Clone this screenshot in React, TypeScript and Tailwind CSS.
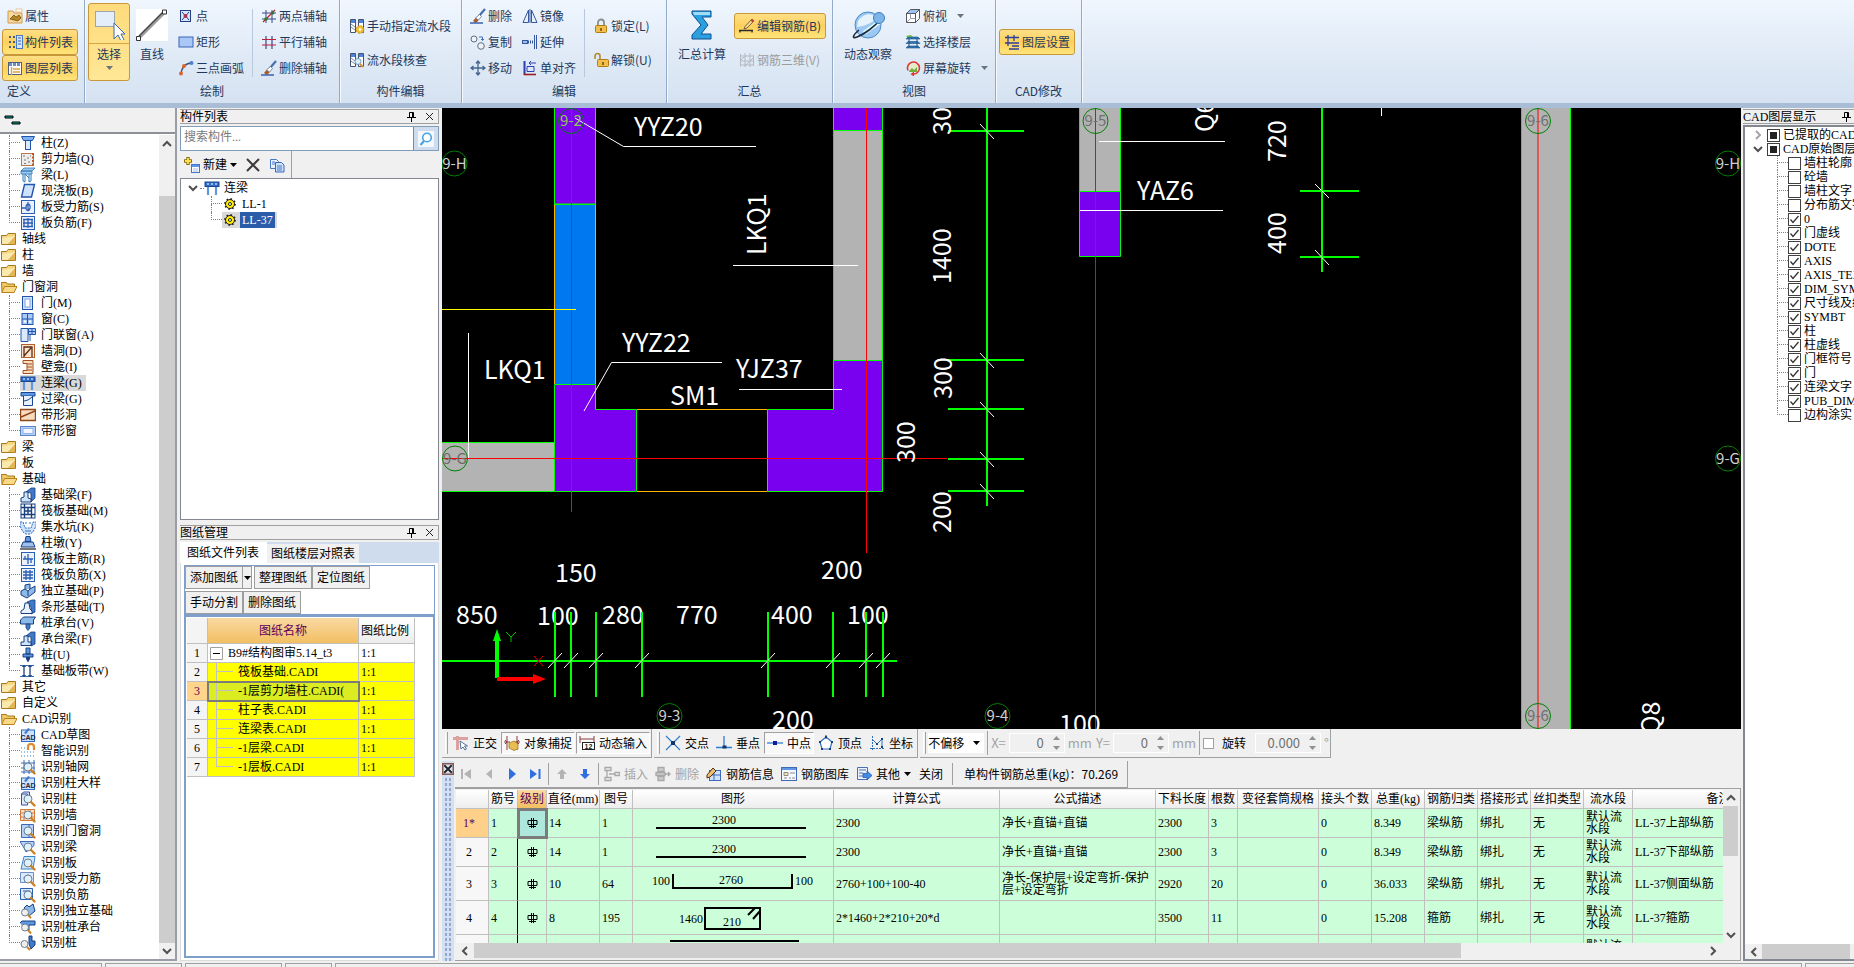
import React, { type ReactNode } from 'react';

/* ---------- small drawings ---------- */

const lens = (
  <>
    <circle cx="8" cy="8" r="4" fill="#dff1fb" stroke="#6d7f92" />
    <path d="M11 11l3.5 3.5" stroke="#c98326" strokeWidth="2.4" strokeLinecap="round" />
  </>
);
const brush = (
  <>
    <path d="M15 1l-6 7" stroke="#4a6fb0" strokeWidth="2.2" />
    <path d="M9.5 6.5l2 2-3 3.5-3-2z" fill="#fff" stroke="#5b6e8c" strokeWidth=".8" />
    <path d="M5.5 10l3 2.5L6 15 3 13z" fill="#a85a2a" />
    <path d="M0 15h13" stroke="#2d57a8" strokeWidth="1.4" />
  </>
);
const hook = (c: string) => (
  <>
    <rect x="1.5" y="1.5" width="13" height="13" fill="#eaf1fc" stroke="#2b5fb4" />
    <path d={c} fill="none" stroke="#2b5fb4" strokeWidth="1.3" />
  </>
);

const ICONS: Record<string, ReactNode> = {
  props: (
    <>
      <path d="M1 3h5l1 2h8v10H1z" fill="#f6d9a0" stroke="#d69a4a" />
      <path d="M3 11l4-4 2 2 3-2 2 3-3 3z" fill="#b88420" stroke="#5b4a10" strokeWidth=".7" />
      <path d="M9 1h6v3H9z" fill="#fff" stroke="#e0b070" strokeWidth=".7" />
    </>
  ),
  complist: (
    <>
      <path d="M2 3h3M2 8h3M2 13h3M6 3h2M6 8h2M6 13h2" stroke="#4b5f80" strokeWidth="2" strokeDasharray="2 1" />
      <rect x="9.5" y="1.5" width="6" height="13" fill="#d5e5fa" stroke="#4a78c0" />
      <path d="M11 4h3M11 7h3M11 10h3" stroke="#2f62b5" />
    </>
  ),
  layers: (
    <>
      <rect x="1.5" y="2.5" width="13" height="12" fill="#fff" stroke="#4b5f80" />
      <path d="M2 4.5h12" stroke="#6f8cc0" strokeWidth="3" strokeDasharray="3 1" />
      <path d="M4.5 7v8M6 9h7M6 12h7" stroke="#e0a040" strokeWidth="1.5" />
    </>
  ),
  point: (
    <>
      <rect x="2.5" y="2.5" width="10" height="11" fill="#d8e4f8" stroke="#253c80" />
      <path d="M4 4l7 8M11 4l-7 8" stroke="#25408f" />
      <circle cx="7.5" cy="8" r="2" fill="#b03050" />
    </>
  ),
  rect: <rect x="1" y="3" width="14" height="10" fill="#a9c8f5" stroke="#3a62b8" />,
  arc: (
    <>
      <path d="M3 14C4 6 8 3 14 3" fill="none" stroke="#3a4f70" strokeWidth="1.3" />
      <circle cx="3" cy="13.5" r="2" fill="#e2622c" />
      <circle cx="6" cy="6" r="2" fill="#e2622c" />
      <circle cx="13.5" cy="3" r="2" fill="#4a80d0" />
    </>
  ),
  twoaxis: (
    <>
      <path d="M5 2v13M11 2v13M1 5h14M1 11h14" stroke="#3b4b86" />
      <path d="M2 14L14 2" stroke="#c02020" strokeWidth="1.3" />
      <circle cx="5" cy="11" r="1.8" fill="#2f7d32" />
      <circle cx="11.5" cy="5" r="1.8" fill="#2f7d32" />
    </>
  ),
  paraxis: (
    <>
      <path d="M5 2v13M11 2v13" stroke="#3b4b86" strokeWidth="1.2" />
      <path d="M1 5.5h14M1 11h14" stroke="#c02040" strokeWidth="1.2" />
    </>
  ),
  brush,
  flowset: (
    <>
      <path d="M1.5 1.5h5v13h-5zM9.5 1.5h5v13h-5z" fill="#fff" stroke="#44546e" />
      <path d="M2 3.5h4M10 3.5h4" stroke="#4c83d8" strokeWidth="3" />
      <path d="M2 9l4 3M2 6l4 3" stroke="#7a8aa0" />
      <circle cx="11" cy="11.5" r="3.8" fill="#f3c234" stroke="#c88e10" strokeDasharray="2 1" />
      <circle cx="11" cy="11.5" r="1.2" fill="#fff" />
    </>
  ),
  flowcheck: (
    <>
      <path d="M1.5 1.5h5v13h-5zM9.5 1.5h5v13h-5z" fill="#fff" stroke="#44546e" />
      <path d="M2 3.5h4M10 3.5h4" stroke="#4c83d8" strokeWidth="3" />
      <path d="M2 9l4 3M2 6l4 3" stroke="#7a8aa0" />
      <circle cx="9" cy="9.5" r="3" fill="#d9f0fb" stroke="#6f9dc0" />
      <path d="M11 12l3 3" stroke="#d8963a" strokeWidth="2" />
    </>
  ),
  copy: (
    <>
      <circle cx="4" cy="5" r="3" fill="#eef3fa" stroke="#5f6e82" />
      <circle cx="11" cy="12" r="3.3" fill="#eef3fa" stroke="#5f6e82" />
      <path d="M9 3h3.5v3.5M11 5l1.5 1.5L14 5" fill="none" stroke="#4270b8" />
    </>
  ),
  move: <path d="M8 1v14M1 8h14M6 3.5L8 1l2 2.5M6 12.5L8 15l2-2.5M3.5 6L1 8l2.5 2M12.5 6L15 8l-2.5 2" fill="none" stroke="#46648f" strokeWidth="1.3" />,
  mirror: (
    <>
      <path d="M6.5 2v12.5H1zM9.5 2v12.5H15z" fill="#e8f0fb" stroke="#35589c" />
      <path d="M8 1v14" stroke="#35589c" />
    </>
  ),
  extend: (
    <>
      <rect x=".5" y="6.5" width="5" height="3" fill="#9fc0ee" stroke="#35589c" />
      <path d="M6 8h5" stroke="#35589c" strokeDasharray="1 1" strokeWidth="3" />
      <path d="M12.5 1v14M14.5 1v14" stroke="#35589c" />
    </>
  ),
  align: (
    <>
      <path d="M2.5 1v14" stroke="#2a3fb0" strokeWidth="2" />
      <path d="M2 14.5h12" stroke="#9c2020" strokeWidth="1.6" />
      <path d="M5 6.5h7v5H5z" fill="#dfe8fb" stroke="#2a3fb0" />
      <path d="M14 3H7M9 1L7 3l2 2" stroke="#2a3fb0" fill="none" />
    </>
  ),
  lock: (
    <>
      <path d="M5 8V4.5a3 3 0 016 0V8" fill="none" stroke="#8d8d8d" strokeWidth="1.8" />
      <rect x="2.5" y="7.5" width="11" height="7" rx="1" fill="#f2c04a" stroke="#b07c14" />
      <path d="M8 10v3" stroke="#6b4a08" strokeWidth="1.5" />
    </>
  ),
  unlock: (
    <>
      <path d="M2 7V4a2.5 2.5 0 015 0v4" fill="none" stroke="#b08a30" strokeWidth="1.6" />
      <rect x="4.5" y="7.5" width="11" height="7" rx="1" fill="#f2c04a" stroke="#b07c14" />
      <path d="M10 10v3" stroke="#6b4a08" strokeWidth="1.5" />
    </>
  ),
  rebaredit: (
    <>
      <path d="M0 12.5h14M1 12.5v2M13 12.5v2" stroke="#2b2b2b" strokeWidth="1.3" />
      <path d="M5 11l1-2.5L13 1l2 1.8L8 10z" fill="#f4dba0" stroke="#5c4520" strokeWidth=".8" />
      <path d="M12.3 2l2 1.8" stroke="#d0433a" strokeWidth="2" />
    </>
  ),
  rebar3d: <path d="M1.5 2v12.5M6 1v14M11 1v14M14.5 3v11M1 4h14M1 9h14M1 13h14M1 9l5-5M6 14l8-8" fill="none" stroke="#b3b9c2" />,
  cube: (
    <>
      <path d="M1.5 5.5l4-4h9v9l-4 4" fill="#fff" stroke="#55595f" />
      <path d="M1.5 5.5l4-4h9l-4 4z" fill="#9cc3f2" stroke="#55595f" />
      <rect x="1.5" y="5.5" width="9" height="9" fill="#fff" stroke="#55595f" />
      <path d="M5.5 5.5v5l-4 4M5.5 10.5h5" fill="none" stroke="#9a9ea6" />
    </>
  ),
  floors: (
    <>
      <path d="M3 3h10l2 2H1zM3 7.5h10l2 2H1zM3 12h10l2 2H1z" fill="#2f77b8" stroke="#1d5082" strokeWidth=".6" />
      <path d="M1 2l5-1 2 2H2z" fill="#6db33f" />
      <path d="M4 5v8M12 5v8" stroke="#1d5082" />
    </>
  ),
  rotate: (
    <>
      <rect x="4" y="4" width="8" height="8" fill="#e5edc8" />
      <path d="M4 11l3-3 2 2 3-3v5H4z" fill="#6fae3e" />
      <path d="M3 10.5A6 6 0 118 14" fill="none" stroke="#e0392c" strokeWidth="1.6" />
      <path d="M5.5 14.2L9 11.5v5z" fill="#e0392c" />
    </>
  ),
  layercfg: <path d="M4 1v11M10 1v6M1 3.5h14M1 9h8M8 9h7M8 12h7M5 15h10" fill="none" stroke="#2a3f9a" strokeWidth="1.3" />,

  column: (
    <>
      <path d="M1.5 1.5h13l-2 4h-9z" fill="#7fb0f0" stroke="#2354ac" />
      <rect x="5.5" y="5.5" width="5" height="9" fill="#dce9fc" stroke="#2354ac" />
    </>
  ),
  wall: (
    <>
      <rect x="1.5" y="2.5" width="12" height="12" fill="#eee" stroke="#b9794c" />
      <path d="M3 5h2M7 7h2M4 9h2M8 11h2M4 12.5h2M10 5h1" stroke="#777" />
      <path d="M13 2v13" stroke="#c0561c" strokeWidth="2" strokeDasharray="2 1.5" />
    </>
  ),
  beam: (
    <>
      <path d="M1 4l3-3h11l-3 3zM1 4h11v3H1z" fill="#9ec9ee" stroke="#2f7ab8" strokeWidth=".8" />
      <path d="M3 7v7l2 1V7M9 7v8l2-1V7M5 7l4 4" fill="none" stroke="#2f7ab8" />
    </>
  ),
  slab: <path d="M4.5 1.5h10l-3 12.5h-10z" fill="#cfe2fc" stroke="#2354ac" strokeWidth="1.4" />,
  slabs: hook('M2 9h4c0-5 5-5 4 0-1 4-4 3-4 0M8 3v9'),
  slabf: hook('M3 4.5h10M3 11.5h10M8 3v10M3 8h10M4 4v8M12 4v8'),
  folder: (
    <>
      <path d="M.5 4.5h5l1.5-2h7.5v11H.5z" fill="#f5d67e" stroke="#a07a1c" />
      <path d="M1 13V7l13-2v8z" fill="#fae9ae" />
      <path d="M7 13l7-8v8.5z" fill="#e0a93c" opacity=".8" />
    </>
  ),
  folderopen: (
    <>
      <path d="M.5 3.5h5l1 1.5h7v8H1z" fill="#f0ca62" stroke="#a07a1c" />
      <path d="M3.5 7.5H16l-3 6H.8z" fill="#fbd98a" stroke="#b98216" />
    </>
  ),
  door: (
    <>
      <rect x="2.5" y="1.5" width="10" height="13" fill="#cfe2fc" stroke="#2354ac" />
      <rect x="5" y="4" width="5" height="8" fill="#fff" stroke="#7aa5e2" />
    </>
  ),
  window: (
    <>
      <rect x="2" y="2.5" width="11" height="11" fill="#a9cbf7" stroke="#2354ac" />
      <path d="M7.5 3v10M2 8h11" stroke="#2354ac" />
      <path d="M4 9.5h2v2H4zM9 9.5h2v2H9z" fill="#fff" />
    </>
  ),
  doorwin: (
    <>
      <path d="M1 1.5h7v13H1z" fill="#dce9fc" stroke="#2354ac" />
      <path d="M8.5 1.5h7v6h-7zM12 2v5M9 4.5h6" fill="#a9cbf7" stroke="#2354ac" />
      <path d="M10 8v6" stroke="#2354ac" />
    </>
  ),
  wallhole: (
    <>
      <rect x="1.5" y="1.5" width="13" height="13" fill="#fbe3cf" stroke="#b5602a" />
      <path d="M4 14V4h8v10M4 13l7-8" fill="none" stroke="#5c2c10" strokeWidth="1.3" />
    </>
  ),
  niche: <path d="M3 1.5h10v13H3v-3h4v-7H3zM7 5h5M7 8h5M7 11h5" fill="#f8dcc2" stroke="#a0521e" />,
  linkbeam: (
    <>
      <rect x="1" y="2" width="14" height="4.5" fill="#2f6bc8" stroke="#1b4690" />
      <path d="M3 4h2M7 4h2M11 4h2" stroke="#b8d3f8" strokeWidth="1.5" />
      <path d="M4 7v8M12 7v8" stroke="#5f97e4" strokeWidth="2.2" />
    </>
  ),
  overbeam: (
    <>
      <path d="M1 1.5h14v3.5H1z" fill="#5f97e4" stroke="#1b4690" />
      <path d="M3.5 5v9.5h9V5M4 10l4-1 4-3" fill="#e8f1fd" stroke="#1b4690" />
    </>
  ),
  striphole: <path d="M.5 2.5h15v11H.5zM1 10l14-6" fill="#f8dcc2" stroke="#8f4718" strokeWidth="1.4" />,
  stripwin: (
    <>
      <rect x=".5" y="3.5" width="15" height="9" fill="#b6d2f8" stroke="#5a83c8" />
      <rect x="3" y="5.5" width="10" height="5" fill="#f3f8ff" stroke="#8fb2e6" />
    </>
  ),
  fbeam: (
    <>
      <path d="M6 5l5-4h4v10l-4 4V6z" fill="#3f79c8" stroke="#173f7c" strokeWidth=".8" />
      <path d="M1 11l3-1V5h4v6l3 1v3H1z" fill="#cfe2fc" stroke="#173f7c" />
    </>
  ),
  raft: (
    <>
      <rect x="1" y="1" width="14" height="14" fill="#fff" stroke="#173f7c" />
      <path d="M4.5 1v14M11.5 1v14M1 4.5h14M1 11.5h14M8 4v8M4 8h8" stroke="#173f7c" strokeWidth="1.4" />
    </>
  ),
  pit: (
    <>
      <path d="M0 3h3l2 6h6l2-6h3v4l-3 6-3 2H6l-3-2-3-6z" fill="#cfe2fc" stroke="#2d6cc0" strokeDasharray="2 1" />
      <path d="M5 12h6M6 3v2M10 3v2" stroke="#2d6cc0" />
    </>
  ),
  pier: (
    <>
      <path d="M6 1.5h4l1 5H5z" fill="#5f97e4" stroke="#173f7c" />
      <path d="M3 7h10l2 5H1z" fill="#9fc0ee" stroke="#173f7c" />
      <path d="M0 14h16" stroke="#777" strokeWidth="2" />
    </>
  ),
  raftm: hook('M3 8h10M8 3v10M5 5v3M11 8v4'),
  raftf: hook('M3 5h10M3 11h10M6 3v10M10 3v10M3 8h10'),
  indep: <path d="M1 8l4-2V2l5-1v5l5-3v6l-8 6-6-3zM5 6l3 2 2-2M8 8v5" fill="#8db8ea" stroke="#173f7c" />,
  strip: (
    <>
      <path d="M7 3l5-2h3v12l-4 2V8z" fill="#3f79c8" stroke="#173f7c" strokeWidth=".8" />
      <path d="M1 14.5V12l3-2 1-6h4l1 6 2 2v2.5z" fill="#e8f1fd" stroke="#173f7c" />
    </>
  ),
  pilecap: (
    <>
      <path d="M.5 5l3-3h12l-2 3v4H.5z" fill="#8db8ea" stroke="#173f7c" />
      <path d="M6 9h4v4l-2 2.5L6 13z" fill="#3f79c8" stroke="#173f7c" strokeWidth=".8" />
    </>
  ),
  capbeam: (
    <>
      <path d="M6 5l5-4h4v12l-4 2V6z" fill="#3f79c8" stroke="#173f7c" strokeWidth=".8" />
      <path d="M1 14.5V11h3V5h4v6h3v3.5z" fill="#cfe2fc" stroke="#173f7c" />
    </>
  ),
  pile: (
    <>
      <path d="M6 1h4v6H6zM3 7h10v3H3z" fill="#5f97e4" stroke="#173f7c" />
      <path d="M6 10h4v2l-2 3.5L6 12z" fill="#173f7c" />
    </>
  ),
  band: (
    <>
      <path d="M0 2.5h15M0 13.5h15" stroke="#2d6cc0" strokeDasharray="2 1" />
      <path d="M4 3v10M10 3v10M2 3h4M8 3h4M2 13h4M8 13h4" stroke="#173f7c" strokeWidth="1.3" />
    </>
  ),
  cad: (
    <>
      <rect x="1.5" y="3" width="13" height="11.5" fill="#cfe2fc" stroke="#2d6cc0" />
      <path d="M4 6l4-5 2 1-4 5z" fill="#3f79c8" />
      <text x="8" y="13" textAnchor="middle" fontSize="7" fontWeight="700" fontFamily="Liberation Sans" fill="#1c2b4c">CAD</text>
    </>
  ),
  smart: (
    <>
      <path d="M1 5h6M1 9h14M1 13h14" stroke="#2d8bd8" strokeWidth="1.2" strokeDasharray="1 2" />
      <path d="M8 7V4a3 3 0 016 0v3" fill="none" stroke="#e38a2c" strokeWidth="2.2" />
    </>
  ),
  idgrid: (
    <>
      <path d="M4 1v14M9 1v14M14 1v14M1 4h14M1 9h14M1 13h14" stroke="#3f68b8" />
      {lens}
    </>
  ),
  idcol: (
    <>
      <path d="M1.5 3l2-2h6v3M1.5 3h6v11h-6z" fill="#dce9fc" stroke="#3b4f9c" />
      {lens}
    </>
  ),
  idwall: (
    <>
      <path d="M.5 2.5h14v11H.5zM0 6h15M0 10h15M5 2v4M10 2v4M4 10v4" fill="#fbe3cf" stroke="#d07a3e" />
      {lens}
    </>
  ),
  idwin: (
    <>
      <path d="M1.5 1.5h12v13h-12zM9 2v12" fill="#b6d2f8" stroke="#3f68b8" />
      {lens}
    </>
  ),
  idbeam: (
    <>
      <path d="M0 2.5h14v4L6 13l-2-4z" fill="#b6d2f8" stroke="#3f68b8" />
      {lens}
    </>
  ),
  idslab: (
    <>
      <path d="M4 1.5h11l-2 12.5H1z" fill="#cfe9fc" stroke="#3a84c8" />
      {lens}
    </>
  ),
  idrebar: (
    <>
      <path d="M.5 1.5h13v10H.5zM3 7h5V3" fill="#dce9fc" stroke="#6f8fc8" />
      {lens}
    </>
  ),
  idneg: (
    <>
      <path d="M.5 1.5h12v11H.5zM3 4h7M6 4v7" fill="#dce9fc" stroke="#2b5fb4" />
      {lens}
    </>
  ),
  idind: (
    <>
      <path d="M4 5l3-3 2 2 4-3 2 7-6 5z" fill="#8db8ea" stroke="#173f7c" />
      <circle cx="5" cy="9.5" r="3.5" fill="#eee" stroke="#6d7f92" />
      <path d="M8 12l3 3" stroke="#c98326" strokeWidth="2" />
    </>
  ),
  idcap: (
    <>
      <path d="M0 4l2-2h13v4H9v5H6" fill="#5f97e4" stroke="#173f7c" />
      <circle cx="5" cy="8.5" r="3.5" fill="#eee" stroke="#6d7f92" />
      <path d="M8 11l3 3.5" stroke="#c98326" strokeWidth="2" />
    </>
  ),
  idpile: (
    <>
      <path d="M9 1h3v5h3v4l-4 4-2-5z" fill="#3f79c8" stroke="#173f7c" />
      <circle cx="4.5" cy="9" r="3.5" fill="#eee" stroke="#6d7f92" />
      <path d="M7 12l3 3" stroke="#c98326" strokeWidth="2" />
    </>
  ),
  search: (
    <>
      <rect width="16" height="16" fill="#f2f8fe" />
      <circle cx="9" cy="6.5" r="4.3" fill="#fff" stroke="#45a4e4" strokeWidth="1.6" />
      <path d="M6 10l-3.5 4" stroke="#45a4e4" strokeWidth="2" />
    </>
  ),
  add: (
    <>
      <path d="M4 0v8M0 4h8" stroke="#8a6d12" strokeWidth="3.4" />
      <path d="M4 1v6M1 4h6" stroke="#ffe14d" strokeWidth="1.8" />
      <rect x="7.5" y="7.5" width="8" height="8" fill="#fff" stroke="#3f79c8" />
      <path d="M8 9h7" stroke="#5f97e4" strokeWidth="2" />
      <path d="M9 12h5M9 14h5" stroke="#9fc0ee" />
    </>
  ),
  remove: <path d="M2 2l12 12M14 2L2 14" stroke="#3b3b3b" strokeWidth="2" />,
  pages: (
    <>
      <path d="M1.5 2.5h6l2 2v7h-8z" fill="#e8f1fd" stroke="#4a78c8" />
      <path d="M6.5 5.5h6l2.5 2.5v7h-8.5z" fill="#cfe2fc" stroke="#3a68b8" />
      <path d="M3 5h3M3 7h3M8 9h5M8 11h5M8 13h5" stroke="#4a78c8" />
    </>
  ),
  gear: (
    <>
      <circle cx="8" cy="8" r="4.5" fill="#ffee00" stroke="#222" strokeWidth="1" />
      <circle cx="8" cy="8" r="5" fill="none" stroke="#222" strokeWidth="1.8" strokeDasharray="1.5 2.4" />
      <circle cx="8" cy="8" r="1.5" fill="#fff" stroke="#222" />
    </>
  ),
  ortho: (
    <>
      <path d="M0 3.5h15M4.5 1v14" stroke="#dba0a0" strokeWidth="3" />
      <path d="M7 6l1 8 2-2 2 3 1.5-1-2-3h3z" fill="#fff" stroke="#52709c" />
    </>
  ),
  snap: (
    <>
      <path d="M3 1v14M13 1v14M0 7h6M10 7h6M1 5l2 2-2 2M15 5l-2 2 2 2" fill="none" stroke="#8c3a3a" />
      <path d="M5 8l5-2 4 3v5l-4 1.5L5 13z" fill="#e8bd52" stroke="#9a6d14" strokeWidth=".7" />
    </>
  ),
  dyn: (
    <>
      <path d="M1 1v7M15 1v7M1 4h14" stroke="#8c3a3a" />
      <rect x="3.5" y="7.5" width="12" height="7" fill="#fff" stroke="#222" />
      <text x="9.5" y="13.5" textAnchor="middle" fontSize="7" fontWeight="700" fontFamily="Liberation Sans" fill="#222">12</text>
    </>
  ),
  cross: (
    <>
      <path d="M1 1l14 14M15 1L1 15" stroke="#2f7fd0" strokeWidth="1.2" />
      <path d="M6 6h4v4H6z" fill="#12366c" />
    </>
  ),
  perp: (
    <>
      <path d="M8 1v12M0 12.5h16" stroke="#2f7fd0" strokeWidth="1.3" />
      <path d="M6.5 10.5h4v3h-4z" fill="#12366c" />
    </>
  ),
  mid: (
    <>
      <path d="M0 8h16" stroke="#2f7fd0" strokeWidth="1.3" />
      <path d="M6 6h4v4H6z" fill="#101c9c" />
    </>
  ),
  vertex: (
    <>
      <path d="M8 2l6 5-2 7H4L2 7z" fill="#fff" stroke="#2f6fc0" strokeWidth="1.2" />
      <path d="M7 .5h2v3H7zM1 6h2v2H1zM13 6h2v2h-2zM3 13h2v2H3zM11 13h2v2h-2z" fill="#173f7c" />
    </>
  ),
  coord: (
    <>
      <path d="M3.5 1v14M1 13.5h14" fill="none" stroke="#2f6fc0" strokeDasharray="2 1" />
      <path d="M4 5l4 4 5-5v8" fill="none" stroke="#2f6fc0" />
      <path d="M7 8h2v2H7zM12 3h2v2h-2zM12 11h2v2h-2z" fill="#173f7c" />
    </>
  ),
  first: <path d="M3 3h2v10H3zM13 3v10L6 8z" fill="#b4b4b4" />,
  prev: <path d="M11 3v10L5 8z" fill="#b4b4b4" />,
  next: <path d="M5 2v12l7-6z" fill="#2f6fe0" />,
  last: <path d="M11.5 3h2v10h-2zM3 3v10l7-5z" fill="#2f6fe0" />,
  up: <path d="M8 3l5 5h-3v5H6V8H3z" fill="#b4b4b4" />,
  down: <path d="M8 13l5-5h-3V3H6v5H3z" fill="#2f6fe0" />,
  insert: <path d="M1 1.5h6v3H1zM1 11.5h6v3H1zM11 6.5h4.5v3H11zM5 8h6M3 5v6" fill="#eee" stroke="#a8a8a8" strokeWidth="1.3" />,
  del: <path d="M3 1.5h6v4H3zM1 6.5h9v3H1zM3 10.5h6v4H3zM10 8h5M13 6l2 2-2 2" fill="#ccc" stroke="#a8a8a8" strokeWidth="1.3" />,
  info: (
    <>
      <rect x="3.5" y="4.5" width="11" height="10" fill="#cfe2fc" stroke="#3f68b8" />
      <path d="M8 5v9M4 9h10" stroke="#3f68b8" />
      <path d="M1 9l6-7 3 3-6 6-3 1z" fill="#e8c070" stroke="#5c2c10" />
    </>
  ),
  lib: (
    <>
      <rect x=".5" y="1.5" width="15" height="13" fill="#f4f9ff" stroke="#3f68b8" />
      <path d="M1 3h14" stroke="#5f97e4" strokeWidth="2" />
      <path d="M3 6.5h4v3H3zM9 7h5M3 12h3M8 12h2M11 12h3" fill="#ffe7a0" stroke="#8a8a8a" />
    </>
  ),
  other: (
    <>
      <path d="M1.5 1.5h10v12h-10z" fill="#eaf2fd" stroke="#4a6fae" />
      <path d="M3 4h7M3 7h4M3 10h4" stroke="#4a6fae" />
      <path d="M7 7.5h4V5l5 4.5L11 14v-2.5H7z" fill="#3f8be8" stroke="#1f4fa0" strokeWidth=".7" />
    </>
  ),
  closegrip: (
    <>
      <rect width="16" height="16" fill="#8a5a50" />
      <rect x="2" y="2" width="12" height="12" fill="#d6e6fa" />
      <path d="M3 3l10 10M13 3L3 13" stroke="#222" strokeWidth="2.4" />
    </>
  ),
};

const Icon = ({ name }: { name: string }) => (
  <svg className="size-4 shrink-0" viewBox="0 0 16 16" aria-hidden="true">
    {ICONS[name]}
  </svg>
);

const Caret = () => (
  <svg className="h-1 w-[7px] shrink-0" viewBox="0 0 7 4" aria-hidden="true">
    <path d="M0 0h7L3.5 4z" fill="currentColor" />
  </svg>
);

const PATHS = {
  up: 'M1 7l4-4 4 4',
  down: 'M1 3l4 4 4-4',
  left: 'M7 1L3 5l4 4',
  right: 'M3 1l4 4-4 4',
};
const Chevron = ({ dir, faint }: { dir: keyof typeof PATHS; faint?: boolean }) => (
  <svg className="size-[10px] shrink-0" viewBox="0 0 10 10" aria-hidden="true">
    <path d={PATHS[dir]} fill="none" stroke={faint ? '#a6a6a6' : '#505050'} strokeWidth="2" />
  </svg>
);

/* ---------- ribbon ---------- */

type RB = { icon: string; label: string; active?: boolean; muted?: boolean; caret?: boolean };

const RibbonButton = ({ icon, label, active, muted, caret }: RB) => (
  <button
    type="button"
    className={`flex h-[26px] items-center gap-[2px] rounded-[3px] border px-1 ${
      active ? 'border-[#c7973a] bg-linear-to-b from-[#fedf86] via-[#fdd05c] to-[#ffe47a]' : 'border-transparent'
    } ${muted ? 'text-[#9b9b9b]' : ''}`}
  >
    <Icon name={icon} />
    <span>{label}</span>
    {caret && (
      <span className="ml-2 text-[#6b7480]">
        <Caret />
      </span>
    )}
  </button>
);

const Stack = ({ items, two }: { items: RB[]; two?: boolean }) => (
  <div className={`flex flex-col items-start ${two ? 'gap-2 pt-[11px]' : 'pt-px'}`}>
    {items.map((b) => (
      <RibbonButton key={b.label} {...b} />
    ))}
  </div>
);

const Group = ({ title, width, pad, children }: { title: string; width: string; pad: string; children: ReactNode }) => (
  <section className={`flex shrink-0 flex-col border-r border-[#93a9c8] shadow-[1px_0_0_#f5f9fe] ${width}`}>
    <div className={`flex flex-1 pt-[2px] ${pad}`}>{children}</div>
    <h2 className="h-5 text-center leading-4">{title}</h2>
  </section>
);

const Divider = () => <div className="mx-[3px] h-[68px] w-px self-center bg-[#b9c8dc]" />;

const Ribbon = () => (
  <header className="flex h-[108px] shrink-0 border-b-[5px] border-[#a9bdd6] bg-linear-to-b from-[#eff6fe] via-[#e1ebf7] to-[#d5e2f1] font-['Noto_Sans_CJK_SC',sans-serif] leading-4 whitespace-nowrap text-[#1e395b]">
    <Group title="定义" width="w-[85px] [&>h2]:pr-[46px]" pad="pl-[2px]">
      <Stack
        items={[
          { icon: 'props', label: '属性' },
          { icon: 'complist', label: '构件列表', active: true },
          { icon: 'layers', label: '图层列表', active: true },
        ]}
      />
    </Group>
    <Group title="绘制" width="w-[255px]" pad="pl-[3px]">
      <button type="button" className="mt-px flex h-[78px] w-[42px] flex-col items-center rounded-[3px] border border-[#c7973a] bg-linear-to-b from-[#fedb7c] to-[#ffe795]">
        <span className="flex h-10 w-full items-center justify-center border-b border-[#d9a640]">
          <svg className="size-8" viewBox="0 0 32 32" aria-hidden="true">
            <rect x="2.5" y="3.5" width="19" height="15" fill="#e4eefb" stroke="#47659a" strokeDasharray="1 1" />
            <path d="M21 15v16l4-4 3 6 3-1-3-6h4z" fill="#fff" stroke="#3f68a8" />
          </svg>
        </span>
        <span className="mt-[2px]">选择</span>
        <span className="mt-1 text-[#6b7480]">
          <Caret />
        </span>
      </button>
      <button type="button" className="ml-1 flex w-9 flex-col items-center pt-[7px]">
        <svg className="size-8 bg-white" viewBox="0 0 32 32" aria-hidden="true">
          <path d="M4 28L28 4" stroke="#9a9a9a" strokeWidth="3" />
          <path d="M3 27L27 3" stroke="#444" strokeWidth="1.5" />
          <path d="M.5 27.5h4v4h-4zM26.5 1h4v4h-4z" fill="#fff" stroke="#333" />
        </svg>
        <span className="mt-[5px]">直线</span>
      </button>
      <div className="ml-[3px]">
        <Stack
          items={[
            { icon: 'point', label: '点' },
            { icon: 'rect', label: '矩形' },
            { icon: 'arc', label: '三点画弧' },
          ]}
        />
      </div>
      <Divider />
      <Stack
        items={[
          { icon: 'twoaxis', label: '两点辅轴' },
          { icon: 'paraxis', label: '平行辅轴' },
          { icon: 'brush', label: '删除辅轴' },
        ]}
      />
    </Group>
    <Group title="构件编辑" width="w-[122px]" pad="pl-1">
      <Stack
        two
        items={[
          { icon: 'flowset', label: '手动指定流水段' },
          { icon: 'flowcheck', label: '流水段核查' },
        ]}
      />
    </Group>
    <Group title="编辑" width="w-[205px]" pad="pl-[3px]">
      <Stack
        items={[
          { icon: 'brush', label: '删除' },
          { icon: 'copy', label: '复制' },
          { icon: 'move', label: '移动' },
        ]}
      />
      <Stack
        items={[
          { icon: 'mirror', label: '镜像' },
          { icon: 'extend', label: '延伸' },
          { icon: 'align', label: '单对齐' },
        ]}
      />
      <Divider />
      <Stack
        two
        items={[
          { icon: 'lock', label: '锁定(L)' },
          { icon: 'unlock', label: '解锁(U)' },
        ]}
      />
    </Group>
    <Group title="汇总" width="w-[166px]" pad="pl-[9px]">
      <button type="button" className="mr-[6px] flex w-[52px] flex-col items-center pt-2">
        <svg className="h-[30px] w-6" viewBox="0 0 24 30" aria-hidden="true">
          <path d="M2 1h19v6h-9l6 8-7 9h10v5H2v-4l9-10-9-11z" fill="#2aa0de" stroke="#0c4f96" />
          <path d="M3 2h17v3H4z" fill="#9fdcf8" />
        </svg>
        <span className="mt-[6px]">汇总计算</span>
      </button>
      <Stack
        two
        items={[
          { icon: 'rebaredit', label: '编辑钢筋(B)', active: true },
          { icon: 'rebar3d', label: '钢筋三维(V)', muted: true },
        ]}
      />
    </Group>
    <Group title="视图" width="w-[163px]" pad="pl-[9px]">
      <button type="button" className="mr-[6px] flex w-[52px] flex-col items-center pt-2">
        <svg className="h-[30px] w-9" viewBox="0 0 36 30" aria-hidden="true">
          <circle cx="18" cy="15" r="13" fill="#9cc8f2" stroke="#4a8ac8" />
          <path d="M8 11C13 3 22 2 27 8c-5 5-12 8-20 9z" fill="#e6f3fd" />
          <path d="M14 23L31 11" stroke="#dff" strokeWidth="4" />
          <path d="M9 20C2 26 2 29 7 27c8-3 18-11 24-18" fill="none" stroke="#1d2c44" strokeWidth="1.6" />
          <circle cx="29" cy="8" r="5.5" fill="#7db5ea" stroke="#3d7dbc" />
        </svg>
        <span className="mt-[6px]">动态观察</span>
      </button>
      <Stack
        items={[
          { icon: 'cube', label: '俯视', caret: true },
          { icon: 'floors', label: '选择楼层' },
          { icon: 'rotate', label: '屏幕旋转', caret: true },
        ]}
      />
    </Group>
    <Group title="CAD修改" width="w-[86px]" pad="pl-[3px]">
      <div className="pt-[27px]">
        <RibbonButton icon="layercfg" label="图层设置" active />
      </div>
    </Group>
  </header>
);

/* ---------- component tree ---------- */

type Folder = { label: string; items?: [string, string][] };

const TREE: Folder[] = [
  {
    label: '',
    items: [
      ['column', '柱(Z)'],
      ['wall', '剪力墙(Q)'],
      ['beam', '梁(L)'],
      ['slab', '现浇板(B)'],
      ['slabs', '板受力筋(S)'],
      ['slabf', '板负筋(F)'],
    ],
  },
  { label: '轴线' },
  { label: '柱' },
  { label: '墙' },
  {
    label: '门窗洞',
    items: [
      ['door', '门(M)'],
      ['window', '窗(C)'],
      ['doorwin', '门联窗(A)'],
      ['wallhole', '墙洞(D)'],
      ['niche', '壁龛(I)'],
      ['linkbeam', '连梁(G)'],
      ['overbeam', '过梁(G)'],
      ['striphole', '带形洞'],
      ['stripwin', '带形窗'],
    ],
  },
  { label: '梁' },
  { label: '板' },
  {
    label: '基础',
    items: [
      ['fbeam', '基础梁(F)'],
      ['raft', '筏板基础(M)'],
      ['pit', '集水坑(K)'],
      ['pier', '柱墩(Y)'],
      ['raftm', '筏板主筋(R)'],
      ['raftf', '筏板负筋(X)'],
      ['indep', '独立基础(P)'],
      ['strip', '条形基础(T)'],
      ['pilecap', '桩承台(V)'],
      ['capbeam', '承台梁(F)'],
      ['pile', '桩(U)'],
      ['band', '基础板带(W)'],
    ],
  },
  { label: '其它' },
  { label: '自定义' },
  {
    label: 'CAD识别',
    items: [
      ['cad', 'CAD草图'],
      ['smart', '智能识别'],
      ['idgrid', '识别轴网'],
      ['cad', '识别柱大样'],
      ['idcol', '识别柱'],
      ['idwall', '识别墙'],
      ['idwin', '识别门窗洞'],
      ['idbeam', '识别梁'],
      ['idslab', '识别板'],
      ['idrebar', '识别受力筋'],
      ['idneg', '识别负筋'],
      ['idind', '识别独立基础'],
      ['idcap', '识别桩承台'],
      ['idpile', '识别桩'],
    ],
  },
];

const Elbow = ({ last }: { last?: boolean }) => (
  <span className="flex h-full w-[11px] shrink-0 flex-col">
    <span className="h-1/2 border-b border-l border-dotted border-[#808080]" />
    {!last && <span className="h-1/2 border-l border-dotted border-[#808080]" />}
  </span>
);

const NavTree = () => (
  <aside className="flex w-[177px] shrink-0 flex-col border-r-2 border-b-2 border-[#9a9da3] bg-white">
    <div className="h-[26px] shrink-0 border-b-2 border-[#8d9096] bg-[#f0f0f0] px-1 pt-[7px]">
      <svg className="h-3 w-[18px]" viewBox="0 0 18 12" aria-hidden="true">
        <path d="M1 1h8v2H1zM8 7h8v2H8z" fill="#0aa39a" stroke="#000" />
      </svg>
    </div>
    <div className="flex min-h-0 flex-1 pt-px">
      <ul className="min-w-0 flex-1 overflow-hidden">
        {TREE.map((f, i) => (
          <li key={i}>
            {f.label && (
              <div className="flex h-4 items-center gap-[5px] pl-px">
                <Icon name={f.items ? 'folderopen' : 'folder'} />
                {f.label}
              </div>
            )}
            {f.items && (
              <ul>
                {f.items.map(([icon, label], k) => (
                  <li key={label} className="flex h-4 items-center pl-[9px]">
                    <Elbow last={k === f.items!.length - 1} />
                    <span className={`flex items-center gap-[5px] pr-1 ${label === '连梁(G)' ? 'bg-[#d9d9d9]' : ''}`}>
                      <Icon name={icon} />
                      {label}
                    </span>
                  </li>
                ))}
              </ul>
            )}
          </li>
        ))}
      </ul>
      <div className="flex w-4 shrink-0 flex-col items-center bg-[#f0f0f0]">
        <span className="flex h-[61px] pt-1">
          <Chevron dir="up" />
        </span>
        <span className="w-full flex-1 bg-[#cdcdcd]" />
        <span className="flex h-4 items-center">
          <Chevron dir="down" />
        </span>
      </div>
    </div>
  </aside>
);

/* ---------- docked panels ---------- */

const Pin = () => (
  <svg className="h-3 w-[9px] shrink-0" viewBox="0 0 9 12" aria-hidden="true">
    <path d="M2.5 6.5v-5h4v5M0 6.5h9M4.5 7v4M5.5 1v5" fill="none" stroke="#000" />
  </svg>
);
const Cross = () => (
  <svg className="size-[9px] shrink-0" viewBox="0 0 9 9" aria-hidden="true">
    <path d="M1 1l7 7M8 1L1 8" stroke="#222" />
  </svg>
);

const PanelTitle = ({ children }: { children: string }) => (
  <div className="flex h-[15px] shrink-0 items-center gap-[9px] border border-l-0 border-[#a0a0a0] pr-1 leading-[14px]">
    <h3 className="flex-1">{children}</h3>
    <Pin />
    <Cross />
  </div>
);

const SHEETS = ['B9#结构图审5.14_t3', '筏板基础.CADI', '-1层剪力墙柱.CADI(', '柱子表.CADI', '连梁表.CADI', '-1层梁.CADI', '-1层板.CADI'];

const FlatButton = ({ children }: { children: ReactNode }) => (
  <button type="button" className="h-[23px] border border-[#9d9d9d] bg-[#f0f0f0] px-1">
    {children}
  </button>
);

const Panels = () => (
  <div className="flex w-[265px] shrink-0 flex-col pt-px pr-[3px] pl-[3px]">
    <section className="flex min-h-0 flex-1 flex-col">
      <PanelTitle>构件列表</PanelTitle>
      <div className="mt-[2px] flex h-[25px] shrink-0 border border-[#7f9db9] bg-[#cfdcee]">
        <input aria-label="搜索构件" placeholder="搜索构件..." className="min-w-0 flex-1 border-r border-[#828790] bg-white px-[3px] pb-1 outline-none placeholder:text-[#7a7a7a]" />
        <button type="button" aria-label="搜索" className="flex w-6 items-center justify-center">
          <Icon name="search" />
        </button>
      </div>
      <div className="flex h-[27px] w-[112px] shrink-0 items-center justify-between border-r border-[#a0a0a0] pr-[6px] pl-1">
        <button type="button" className="flex items-center gap-[3px]">
          <Icon name="add" />
          新建
          <Caret />
        </button>
        <button type="button" aria-label="删除" className="flex">
          <Icon name="remove" />
        </button>
        <button type="button" aria-label="复制" className="flex">
          <Icon name="pages" />
        </button>
      </div>
      <ul className="flex-1 border border-[#828790] bg-white pt-px">
        <li>
          <div className="flex h-4 items-center pl-[7px]">
            <Chevron dir="down" />
            <span className="ml-[2px] w-[4px] border-t border-dotted border-[#808080]" />
            <Icon name="linkbeam" />
            <span className="ml-1">连梁</span>
          </div>
          <ul>
            <li className="flex h-4 items-center pl-[30px]">
              <Elbow />
              <Icon name="gear" />
              <span className="ml-[2px] px-[2px]">LL-1</span>
            </li>
            <li className="flex h-4 items-center pl-[30px]">
              <Elbow last />
              <span className="flex h-4 items-center bg-[#d9d9d9] pr-[2px]">
                <Icon name="gear" />
                <span className="ml-[2px] bg-[#2a5caa] px-[2px] leading-4 text-white">LL-37</span>
              </span>
            </li>
          </ul>
        </li>
      </ul>
    </section>

    <section className="mt-[5px] flex h-[436px] shrink-0 flex-col">
      <PanelTitle>图纸管理</PanelTitle>
      <div className="mt-[2px] flex h-[21px] shrink-0 items-end bg-[#cfdcee]" role="tablist">
        <button type="button" role="tab" aria-selected="true" className="h-[21px] bg-white pr-2 pl-[7px]">
          图纸文件列表
        </button>
        <button type="button" role="tab" aria-selected="false" className="h-[19px] bg-[#f0f0f0] px-1">
          图纸楼层对照表
        </button>
      </div>
      <div className="flex min-h-0 flex-1 flex-col border-x border-b border-[#dcdcdc] bg-white px-[3px] pt-[2px] pb-[2px]">
        <div className="flex h-[50px] shrink-0 flex-col gap-[2px] border border-[#7f9fcb]">
          <div className="flex">
            <FlatButton>添加图纸</FlatButton>
            <button type="button" aria-label="更多" className="mr-[2px] flex h-[23px] w-[9px] items-center justify-center border border-l-0 border-[#9d9d9d] bg-[#f0f0f0]">
              <Caret />
            </button>
            <FlatButton>整理图纸</FlatButton>
            <FlatButton>定位图纸</FlatButton>
          </div>
          <div className="flex">
            <FlatButton>手动分割</FlatButton>
            <FlatButton>删除图纸</FlatButton>
          </div>
        </div>
        <div className="min-h-0 flex-1 border-2 border-[#7f9fcb] pt-px pl-px">
          <table className="w-[228px] table-fixed border-separate border-spacing-0 text-left">
            <colgroup>
              <col className="w-[21px]" />
              <col className="w-[151px]" />
              <col className="w-[56px]" />
            </colgroup>
            <thead>
              <tr className="h-[26px]">
                <th className="border-r border-b border-[#c0c0c0] bg-[#f4f4f4]" />
                <th className="border-r border-b border-[#c0c0c0] bg-linear-to-b from-[#f9d9a0] to-[#f2bf62] text-center font-normal text-[#5c005c]">图纸名称</th>
                <th className="border-r border-b border-[#c0c0c0] bg-linear-to-b from-white to-[#ececec] p-0 pl-[2px] font-normal">图纸比例</th>
              </tr>
            </thead>
            <tbody>
              {SHEETS.map((s, i) => (
                <tr key={s} className="h-[19px]">
                  <th className={`border-r border-b border-[#c0c0c0] text-center font-normal ${i === 2 ? 'bg-[#ffd58c] text-[#5c005c]' : 'bg-[#f4f4f4]'}`}>{i + 1}</th>
                  <td
                    className={`border-r border-b border-[#c0c0c0] p-0 whitespace-nowrap ${i > 0 && i !== 2 ? 'bg-[#ffff00]' : ''} ${
                      i === 2 ? 'bg-[#dbec20] outline-2 -outline-offset-1 outline-[#7b7b7b]' : ''
                    }`}
                  >
                    {i === 0 ? (
                      <span className="flex items-center gap-[5px] pl-[2px]">
                        <svg className="size-[13px]" viewBox="0 0 13 13" aria-hidden="true">
                          <path d="M.5.5h12v12H.5z" fill="#fff" stroke="#a0a0a0" />
                          <path d="M3 6.5h7" stroke="#000" />
                        </svg>
                        {s}
                      </span>
                    ) : (
                      <span className="flex h-[18px] items-center pl-2">
                        <span className="mr-[5px] flex h-full w-[17px] flex-col">
                          <span className="h-1/2 border-b border-l border-[#c0c0c0]" />
                          {i < 6 && <span className="h-1/2 border-l border-[#c0c0c0]" />}
                        </span>
                        {s}
                      </span>
                    )}
                  </td>
                  <td className={`border-r border-b border-[#c0c0c0] p-0 pl-[2px] ${i > 0 ? 'bg-[#ffff00]' : ''}`}>1:1</td>
                </tr>
              ))}
            </tbody>
          </table>
        </div>
      </div>
    </section>
  </div>
);

/* ---------- drawing ---------- */

const G = '#00ff00';
const P = '#7a00f0';

const Bubble = ({ x, y, t, c = '#d0d0d0' }: { x: number; y: number; t: string; c?: string }) => (
  <>
    <circle cx={x} cy={y} r="12.5" fill="none" stroke="#008000" />
    <text x={x} y={y + 5} textAnchor="middle" fontSize="15" fill={c}>
      {t}
    </text>
  </>
);

const Up = ({ x, y, children }: { x: number; y: number; children: string }) => <text transform={`translate(${x} ${y}) rotate(-90)`}>{children}</text>;

const V_TICKS = [131, 360, 409, 459, 491];
const H_TICKS = [555, 571, 596, 642, 768, 833, 866, 883];

const Drawing = () => (
  <svg
    className="block h-full w-full bg-black"
    viewBox="442 108 1299 621"
    preserveAspectRatio="xMinYMin slice"
    role="img"
    aria-label="CAD"
    fontFamily="'Noto Sans CJK SC', sans-serif"
    fontSize="25"
    fill="#fff"
  >
    <g strokeWidth="1">
      <rect x="442" y="442.5" width="112" height="49" fill="#b3b3b3" />
      <path d="M442 442.5h112M442 491.5h112" stroke={G} />
      <path d="M554.5 100h41v104h-41z" fill={P} stroke={G} />
      <rect x="554.5" y="204.5" width="41" height="180" fill="#0078f0" />
      <path d="M554.5 205v179M595.5 205v179" stroke="#ffb400" />
      <path d="M554.5 384.5h41v25h41v82h-82zM554 204.5h42" fill={P} stroke={G} />
      <path d="M833.5 100h49v30.5h-49z" fill={P} stroke={G} />
      <path d="M833.5 130.5h49v230h-49z" fill="#b3b3b3" stroke={G} />
      <path d="M833.5 360.5h49v131h-115v-82h66z" fill={P} stroke={G} />
      <path d="M637 409.5h130M637 491.5h130" stroke="#ffb400" />
      <path d="M1079.5 100h41v91.5h-41z" fill="#b3b3b3" stroke={G} />
      <path d="M1079.5 191.5h41v65h-41z" fill={P} stroke={G} />
      <path d="M1521.5 100h49v700h-49z" fill="#b3b3b3" stroke={G} />
    </g>
    <g stroke="#ff0000">
      <path d="M571.5 108v404" stroke="#d01040" />
      <path d="M866.5 108v445M442 458.5h505M1095.5 108v621M1538 108v621" />
    </g>
    <path d="M442 309.5h134" stroke="#ffff00" />
    <path
      d="M468.5 333v125M575 118l48.5 28.5H756M733 265.5h125M584 411l27.5-48.5H722M739 389.5h103M1099 141.5h126M1080 210.5h143M1381.5 108v8"
      fill="none"
      stroke="#fff"
    />
    <g stroke={G} strokeWidth="2">
      <path d="M987 108v398M1322 108v164M442 661h455M1300 191h59M1300 257h59" />
      {V_TICKS.map((y) => (
        <path key={y} d={`M948 ${y}h76`} />
      ))}
    </g>
    <Up x={951} y={135}>300</Up>
    <Up x={951} y={284}>1400</Up>
    <Up x={952} y={399}>300</Up>
    <Up x={915} y={463}>300</Up>
    <Up x={951} y={533}>200</Up>
    <Up x={766} y={255}>LKQ1</Up>
    <Up x={1214} y={132}>Q6</Up>
    <Up x={1286} y={162}>720</Up>
    <Up x={1286} y={254}>400</Up>
    <Up x={1660} y={734}>Q8</Up>
    <text x="634" y="136">YYZ20</text>
    <text x="622" y="352">YYZ22</text>
    <text x="736" y="378">YJZ37</text>
    <text x="484" y="379">LKQ1</text>
    <text x="670" y="405">SM1</text>
    <text x="1137" y="200">YAZ6</text>
    <text x="555" y="582">150</text>
    <text x="821" y="579">200</text>
    <text x="456" y="624">850</text>
    <text x="537" y="625">100</text>
    <text x="602" y="624">280</text>
    <text x="676" y="624">770</text>
    <text x="771" y="624">400</text>
    <text x="847" y="624">100</text>
    <text x="772" y="729">200</text>
    <text x="1059" y="733">100</text>
    <g stroke={G} strokeWidth="2">
      {H_TICKS.map((x) => (
        <path key={x} d={`M${x} 612v85`} />
      ))}
    </g>
    <g stroke="#fff">
      {V_TICKS.map((y) => (
        <path key={y} d={`M980 ${y - 7}l14 15`} />
      ))}
      {H_TICKS.map((x) => (
        <path key={x} d={`M${x - 7} 668l14-15`} />
      ))}
      <path d="M1315 184l14 14M1315 250l14 15" />
    </g>
    <path d="M495 678v-37h-2l4-12 4 12h-2v37z" fill={G} />
    <path d="M497 677h36v-3l13 5-13 5v-3h-36z" fill="#ff0000" />
    <path d="M506 632l5 5 5-5M511 637v5" stroke="#00c000" fill="none" />
    <path d="M534 656l9 10M543 656l-9 10" stroke="#e00000" />
    <Bubble x={454.5} y={163.5} t="9-H" />
    <Bubble x={571} y={121} t="9-2" c="#8cc850" />
    <Bubble x={455} y={458.5} t="9-G" c="#6a6a6a" />
    <Bubble x={669.5} y={716} t="9-3" />
    <Bubble x={997.5} y={716} t="9-4" />
    <Bubble x={1095.5} y={121} t="9-5" c="#707070" />
    <Bubble x={1538} y={121} t="9-6" c="#707070" />
    <Bubble x={1538} y={716} t="9-6" c="#707070" />
    <Bubble x={1728} y={163.5} t="9-H" />
    <Bubble x={1728} y={458.5} t="9-G" />
  </svg>
);

/* ---------- snap bar ---------- */

const Bar = ({ children }: { children: ReactNode }) => (
  <div className="flex items-center gap-px border-r border-b border-[#a0a0a0] pr-px">
    <span className="mr-px ml-[3px] h-[22px] w-[3px] border-x border-l-white border-r-[#a0a0a0]" />
    {children}
  </div>
);

const Tool = ({ icon, label, on, muted }: { icon: string; label: string; on?: boolean; muted?: boolean }) => (
  <button
    type="button"
    className={`flex h-[22px] items-center gap-1 border px-[2px] ${on ? 'border-t-[#a0a0a0] border-r-white border-b-white border-l-[#a0a0a0] bg-[#f8f8f8]' : 'border-transparent'} ${
      muted ? 'text-[#a3a3a3]' : ''
    }`}
  >
    <Icon name={icon} />
    {label}
  </button>
);

const Spin = ({ label, value, wide, unit }: { label?: string; value: string; wide?: boolean; unit: string }) => (
  <label className="flex items-center gap-[3px] text-[13px] text-[#a3a3a3]">
    {label}
    <span className="flex h-5 items-center border border-white">
      <input aria-label={label ?? '旋转角度'} defaultValue={value} className={`bg-transparent pr-[9px] text-right text-[#707070] outline-none ${wide ? 'w-[53px]' : 'w-[43px]'}`} />
      <svg className="mr-1 h-[14px] w-[7px]" viewBox="0 0 7 14" aria-hidden="true">
        <path d="M0 4h7L3.5 0zM0 10h7l-3.5 4z" fill="#909090" />
      </svg>
    </span>
    {unit}
  </label>
);

const SnapBar = () => (
  <div className="flex h-[29px] shrink-0 gap-[2px] font-['Noto_Sans_CJK_SC',sans-serif] whitespace-nowrap">
    <Bar>
      <Tool icon="ortho" label="正交" />
      <Tool icon="snap" label="对象捕捉" on />
      <Tool icon="dyn" label="动态输入" on />
    </Bar>
    <Bar>
      <Tool icon="cross" label="交点" />
      <Tool icon="perp" label="垂点" />
      <Tool icon="mid" label="中点" on />
      <Tool icon="vertex" label="顶点" />
      <Tool icon="coord" label="坐标" />
    </Bar>
    <Bar>
      <span className="flex h-5 w-[56px] items-center bg-white">
        <select aria-label="偏移方式" className="min-w-0 flex-1 appearance-none bg-transparent outline-none">
          <option>不偏移</option>
        </select>
        <span className="mr-1">
          <Caret />
        </span>
      </span>
      <span className="mx-[2px] h-6 w-px bg-[#a0a0a0]" />
      <div className="flex gap-1">
        <Spin label="X=" value="0" unit="mm" />
        <Spin label="Y=" value="0" unit="mm" />
      </div>
      <span className="mx-[2px] h-6 w-px bg-[#a0a0a0]" />
      <label className="mr-2 flex items-center gap-2">
        <input type="checkbox" className="size-[11px] appearance-none border border-[#a0a0a0] bg-white" />
        旋转
      </label>
      <Spin value="0.000" wide unit="°" />
    </Bar>
  </div>
);

/* ---------- rebar table ---------- */

const COLS: [string, string][] = [
  ['', 'w-[33px]'],
  ['筋号', 'w-[29px]'],
  ['级别', 'w-[29px]'],
  ['直径(mm)', 'w-[53px]'],
  ['图号', 'w-[33px]'],
  ['图形', 'w-[201px]'],
  ['计算公式', 'w-[166px]'],
  ['公式描述', 'w-[156px]'],
  ['下料长度', 'w-[53px]'],
  ['根数', 'w-[29px]'],
  ['变径套筒规格', 'w-[81px]'],
  ['接头个数', 'w-[53px]'],
  ['总重(kg)', 'w-[53px]'],
  ['钢筋归类', 'w-[53px]'],
  ['搭接形式', 'w-[53px]'],
  ['丝扣类型', 'w-[53px]'],
  ['流水段', 'w-[49px]'],
  ['备注', 'w-[172px]'],
];

const Grade = () => (
  <svg className="mx-auto h-3 w-[11px]" viewBox="0 0 11 12" aria-hidden="true">
    <path d="M1 3.5h9v4H1zM4.5 1v10M6.5 1v10M2 9.5h7" fill="none" stroke="#000" />
  </svg>
);

const Shape = ({ kind }: { kind: 'bar' | 'u' | 'box' | 'top' }) => (
  <svg className="block h-[28px] w-full" viewBox="0 0 200 28" fontSize="12" aria-hidden="true">
    {kind === 'bar' && (
      <>
        <text x="91" y="15" textAnchor="middle">2300</text>
        <path d="M23 19h150" stroke="#000" strokeWidth="2" />
      </>
    )}
    {kind === 'u' && (
      <>
        <path d="M40 4v14h119V4" fill="none" stroke="#000" strokeWidth="2" />
        <text x="98" y="14" textAnchor="middle">2760</text>
        <text x="19" y="15">100</text>
        <text x="162" y="15">100</text>
      </>
    )}
    {kind === 'box' && (
      <>
        <path d="M72 4h55v21H72zM115 11l7-7M120 15l7-8" fill="none" stroke="#000" strokeWidth="2" />
        <text x="99" y="22" textAnchor="middle">210</text>
        <text x="46" y="19">1460</text>
      </>
    )}
    {kind === 'top' && <path d="M37 6h129" stroke="#000" strokeWidth="2" />}
  </svg>
);

const ROWS: { h: string; shape: 'bar' | 'u' | 'box' | 'top'; c: string[] }[] = [
  { h: 'h-[29px]', shape: 'bar', c: ['1*', '1', '14', '1', '2300', '净长+直锚+直锚', '2300', '3', '', '0', '8.349', '梁纵筋', '绑扎', '无', '默认流水段', 'LL-37上部纵筋'] },
  { h: 'h-[29px]', shape: 'bar', c: ['2', '2', '14', '1', '2300', '净长+直锚+直锚', '2300', '3', '', '0', '8.349', '梁纵筋', '绑扎', '无', '默认流水段', 'LL-37下部纵筋'] },
  { h: 'h-[34px]', shape: 'u', c: ['3', '3', '10', '64', '2760+100+100-40', '净长-保护层+设定弯折-保护层+设定弯折', '2920', '20', '', '0', '36.033', '梁纵筋', '绑扎', '无', '默认流水段', 'LL-37侧面纵筋'] },
  { h: 'h-[34px]', shape: 'box', c: ['4', '4', '8', '195', '2*1460+2*210+20*d', '', '3500', '11', '', '0', '15.208', '箍筋', '绑扎', '无', '默认流水段', 'LL-37箍筋'] },
  { h: 'h-[34px]', shape: 'top', c: ['', '', '', '', '', '', '', '', '', '', '', '', '', '', '默认流水段', ''] },
];

const CELL = 'border-r border-b border-[#c0c0c0] p-0 font-normal';

const RebarTable = () => (
  <table className="w-[1349px] table-fixed border-separate border-spacing-0 text-left leading-3">
    <colgroup>
      {COLS.map(([n, w]) => (
        <col key={n} className={w} />
      ))}
    </colgroup>
    <thead>
      <tr className="h-[19px]">
        {COLS.map(([n]) => (
          <th
            key={n}
            className={`${CELL} text-center whitespace-nowrap ${n === '级别' ? 'bg-linear-to-b from-[#f9d9a0] to-[#f2bf62] text-[#5c005c]' : 'bg-linear-to-b from-white to-[#ededed]'}`}
          >
            {n}
          </th>
        ))}
      </tr>
    </thead>
    <tbody>
      {ROWS.map((r, i) => (
        <tr key={i} className={`${r.h} bg-[#ccffd9]`}>
          <th className={`border-r border-b border-[#c0c0c0] p-0 pr-[6px] text-center font-normal ${i === 0 ? 'bg-[#ffd08a] text-[#5c005c]' : 'bg-[#f7f7f7]'}`}>{r.c[0]}</th>
          <td className={`${CELL} border-r-black pl-[2px]`}>{r.c[1]}</td>
          <td className={`${CELL} ${i === 0 ? 'bg-[#aee8dc] outline-3 -outline-offset-2 outline-[#7b7b7b]' : ''}`}>{i < 4 && <Grade />}</td>
          <td className={`${CELL} pl-[2px]`}>{r.c[2]}</td>
          <td className={`${CELL} pl-[2px]`}>{r.c[3]}</td>
          <td className={`${CELL} ${i === 4 ? 'align-top' : ''}`}>
            <Shape kind={r.shape} />
          </td>
          {r.c.slice(4).map((v, k) => (
            <td key={k} className={`${CELL} pl-[2px]`}>
              {v}
            </td>
          ))}
        </tr>
      ))}
    </tbody>
  </table>
);

const Sep = () => <span className="mx-px h-[22px] w-px shrink-0 bg-[#a0a0a0]" />;

const Nav = ({ icon, label }: { icon: string; label: string }) => (
  <button type="button" aria-label={label} className="flex px-[3px]">
    <Icon name={icon} />
  </button>
);

const RebarDock = () => (
  <div className="flex min-h-0 flex-1 pt-[3px]">
    <div className="flex w-[12px] shrink-0 flex-col items-center bg-[#d4e0f2]">
      <button type="button" aria-label="关闭" className="flex w-3 [&>svg]:w-3">
        <Icon name="closegrip" />
      </button>
      <div className="w-2 flex-1 bg-[radial-gradient(#8fa9d0_1px,transparent_1px)] bg-[length:4px_5px]" />
    </div>
    <div className="ml-px flex min-w-0 flex-1 flex-col">
      <div className="flex h-[27px] w-fit shrink-0 items-center gap-px border-r border-b border-[#a0a0a0] font-['Noto_Sans_CJK_SC',sans-serif] whitespace-nowrap">
        <Nav icon="first" label="首行" />
        <Nav icon="prev" label="上一行" />
        <Nav icon="next" label="下一行" />
        <Nav icon="last" label="末行" />
        <Sep />
        <Nav icon="up" label="上移" />
        <Nav icon="down" label="下移" />
        <Sep />
        <Tool icon="insert" label="插入" muted />
        <Tool icon="del" label="删除" muted />
        <Tool icon="info" label="钢筋信息" />
        <Tool icon="lib" label="钢筋图库" />
        <Tool icon="other" label="其他" />
        <Caret />
        <button type="button" className="mx-[7px]">关闭</button>
        <Sep />
        <span className="px-[9px]">单构件钢筋总重(kg)：70.269</span>
      </div>
      <div className="flex min-h-0 flex-1 flex-col border border-l-0 border-[#a0a0a0] pt-px pr-[2px] pb-[2px] pl-px">
        <div className="flex min-h-0 flex-1">
          <div className="min-w-0 flex-1 overflow-hidden">
            <RebarTable />
          </div>
          <div className="flex w-[15px] shrink-0 flex-col items-center bg-[#f0f0f0]">
            <span className="flex h-4 items-center">
              <Chevron dir="up" />
            </span>
            <span className="h-[50px] w-full bg-[#cdcdcd]" />
            <span className="mt-auto flex h-4 items-center">
              <Chevron dir="down" />
            </span>
          </div>
        </div>
        <div className="flex h-[15px] shrink-0 items-center bg-[#f0f0f0]">
          <span className="flex w-[18px] justify-center">
            <Chevron dir="left" />
          </span>
          <span className="h-full w-[77%] bg-[#cdcdcd]" />
          <span className="mr-5 ml-auto">
            <Chevron dir="right" />
          </span>
        </div>
      </div>
    </div>
  </div>
);

/* ---------- layer list ---------- */

const LAYERS: [string, boolean][] = [
  ['墙柱轮廓', false],
  ['砼墙', false],
  ['墙柱文字', false],
  ['分布筋文字', false],
  ['0', true],
  ['门虚线', true],
  ['DOTE', true],
  ['AXIS', true],
  ['AXIS_TEXT', true],
  ['DIM_SYMB', true],
  ['尺寸线及编号', true],
  ['SYMBT', true],
  ['柱', true],
  ['柱虚线', true],
  ['门框符号', true],
  ['门', true],
  ['连梁文字', true],
  ['PUB_DIM', true],
  ['边构涂实', false],
];

const Check = ({ label, checked, partial }: { label: string; checked?: boolean; partial?: boolean }) => (
  <label className="flex items-center gap-[3px] leading-[14px]">
    <span className="grid shrink-0">
      <input type="checkbox" defaultChecked={checked || partial} className="peer col-start-1 row-start-1 size-[13px] appearance-none border border-[#404040] bg-white" />
      <svg className="pointer-events-none invisible col-start-1 row-start-1 size-[13px] peer-checked:visible" viewBox="0 0 13 13" aria-hidden="true">
        {partial ? <path d="M3 3h7v7H3z" fill="#222" /> : <path d="M2.5 6.5l2.5 3 5.5-6.5" fill="none" stroke="#333" strokeWidth="1.3" />}
      </svg>
    </span>
    {label}
  </label>
);

const LayerPanel = () => (
  <aside className="flex w-[111px] shrink-0 flex-col overflow-hidden pt-px whitespace-nowrap">
    <div className="flex h-[15px] shrink-0 items-center border-y border-[#a0a0a0] pr-[3px] leading-[14px]">
      <h3 className="flex-1">CAD图层显示</h3>
      <Pin />
    </div>
    <div className="mt-px flex min-h-0 flex-1 flex-col border-2 border-r-0 border-[#828790] bg-white">
      <ul className="flex-1 pt-px pl-2">
        <li className="flex h-[14px] items-center gap-[2px]">
          <Chevron dir="right" faint />
          <span className="w-[4px] border-t border-dotted border-[#808080]" />
          <Check label="已提取的CAD图层" partial />
        </li>
        <li>
          <div className="flex h-[14px] items-center gap-[2px]">
            <Chevron dir="down" />
            <span className="w-[4px] border-t border-dotted border-[#808080]" />
            <Check label="CAD原始图层" partial />
          </div>
          <ul>
            {LAYERS.map(([n, c], i) => (
              <li key={n} className="flex h-[14px] items-center pl-[24px]">
                <Elbow last={i === LAYERS.length - 1} />
                <Check label={n} checked={c} />
              </li>
            ))}
          </ul>
        </li>
      </ul>
      <div className="flex h-[15px] shrink-0 items-center bg-[#f0f0f0]">
        <span className="flex w-[17px] justify-center">
          <Chevron dir="left" />
        </span>
        <span className="mr-1 h-full flex-1 bg-[#cdcdcd]" />
      </div>
    </div>
  </aside>
);

export default function App() {
  return (
    <div className="flex h-screen flex-col overflow-hidden bg-[#f0f0f0] font-['Liberation_Serif','Noto_Sans_CJK_SC',serif] text-[12px] leading-4 text-black">
      <Ribbon />
      <main className="flex min-h-0 flex-1">
        <NavTree />
        <Panels />
        <div className="flex min-w-0 flex-1 flex-col">
          <div className="min-h-0 flex-1">
            <Drawing />
          </div>
          <div className="flex h-[232px] shrink-0 flex-col">
            <SnapBar />
            <RebarDock />
          </div>
        </div>
        <div className="w-[2px] shrink-0" />
        <LayerPanel />
      </main>
      <footer className="flex h-[6px] shrink-0 gap-[3px] pt-[2px]">
        <span className="w-[102px] border-t border-r border-[#a0a0a0]" />
        <span className="w-[77px] border border-b-0 border-[#a0a0a0]" />
        <span className="w-[97px] border border-b-0 border-[#a0a0a0]" />
        <span className="w-[47px] border border-b-0 border-[#a0a0a0]" />
        <span className="flex-1 border border-b-0 border-[#a0a0a0]" />
        <span className="w-[49px] border-t border-l border-[#a0a0a0]" />
      </footer>
    </div>
  );
}
